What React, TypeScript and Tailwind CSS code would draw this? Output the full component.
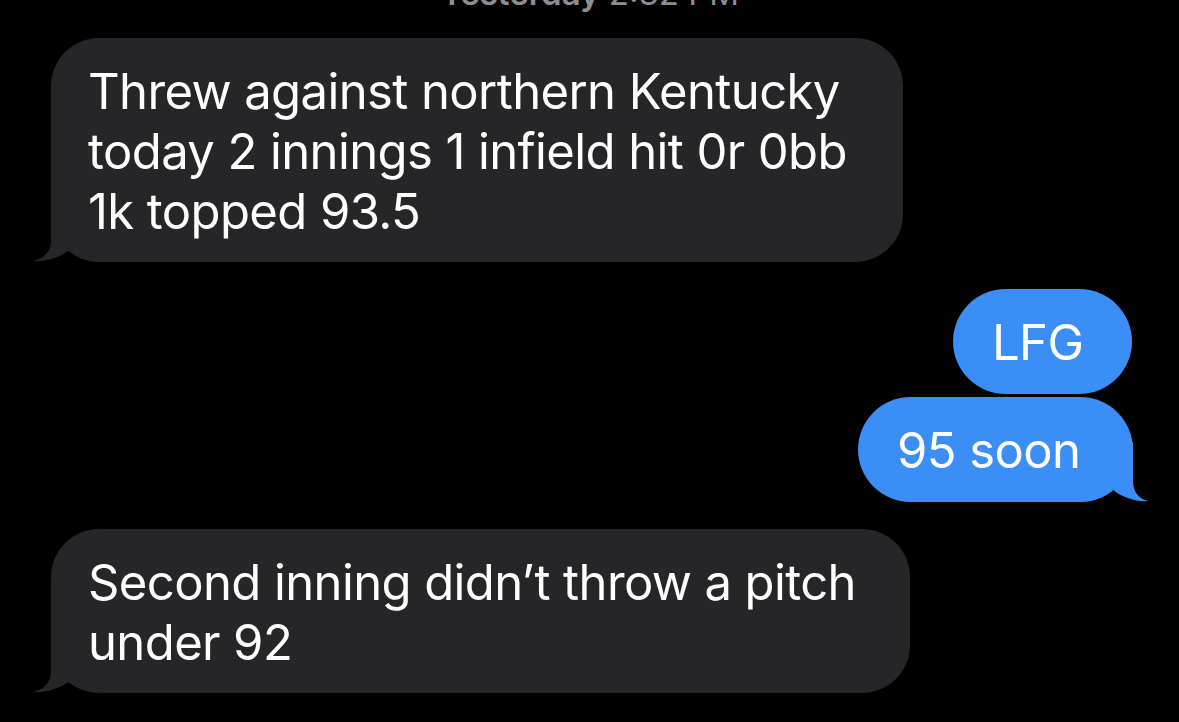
import React from "react";

const FONT = { fontFamily: 'Inter, "Liberation Sans", sans-serif' };

function GrayTail() {
  return (
    <svg
      className="absolute bottom-0 left-[-20px]"
      width="44"
      height="60"
      viewBox="0 0 44 60"
    >
      <path
        d="M20 0 L20 39 C20 51 11 57 2 59 C14 60 28 56 38 48.5 L44 0 Z"
        fill="#262629"
      />
    </svg>
  );
}

function BlueTail() {
  return (
    <svg
      className="absolute bottom-0 right-[-16px]"
      width="40"
      height="60"
      viewBox="0 0 40 60"
    >
      <path
        d="M24 0 L24 39 C24 51 31 57 39 59 C28 60 14 56 5 48.5 L0 0 Z"
        fill="#3a8ef6"
      />
    </svg>
  );
}

function GrayBubble({ lines, width }: { lines: string[]; width: string }) {
  return (
    <div
      className={`relative self-start ml-[51px] rounded-[48px] bg-[#262629] pl-[37px] pr-[20px] pt-[24px] pb-[20px] text-white text-[49px] leading-[60px] tracking-[-0.6px] whitespace-nowrap ${width}`}
    >
      <GrayTail />
      <div className="relative">
        {lines.map((l, i) => (
          <div key={i}>{l}</div>
        ))}
      </div>
    </div>
  );
}

export default function App() {
  return (
    <div
      className="w-[1179px] h-[722px] overflow-hidden bg-black flex flex-col"
      style={FONT}
    >
      <div className="-mt-[24px] h-[34px] text-center text-[33px] leading-[34px] text-[#8d8d93] whitespace-nowrap">
        <span className="font-semibold">Yesterday</span> 2:32 PM
      </div>
      <div className="h-[28px]" />
      <GrayBubble
        width="w-[852px]"
        lines={[
          "Threw against northern Kentucky",
          "today 2 innings 1 infield hit 0r 0bb",
          "1k topped 93.5",
        ]}
      />
      <div className="relative self-end mt-[27px] mr-[47px] w-[179px] h-[105px] rounded-[53px] bg-[#3a8ef6] pl-[39px] pt-[24px] pb-[20px] text-white text-[49px] leading-[60px] tracking-[-0.6px]">
        LFG
      </div>
      <div className="relative self-end mt-[3px] mr-[46px] w-[275px] h-[105px] rounded-[53px] bg-[#3a8ef6] pl-[39px] pt-[24px] pb-[20px] text-white text-[49px] leading-[60px] tracking-[-0.6px] whitespace-nowrap">
        <BlueTail />
        <div className="relative">95 soon</div>
      </div>
      <div className="h-[27px]" />
      <GrayBubble
        width="w-[859px]"
        lines={["Second inning didn\u2019t throw a pitch", "under 92"]}
      />
    </div>
  );
}
